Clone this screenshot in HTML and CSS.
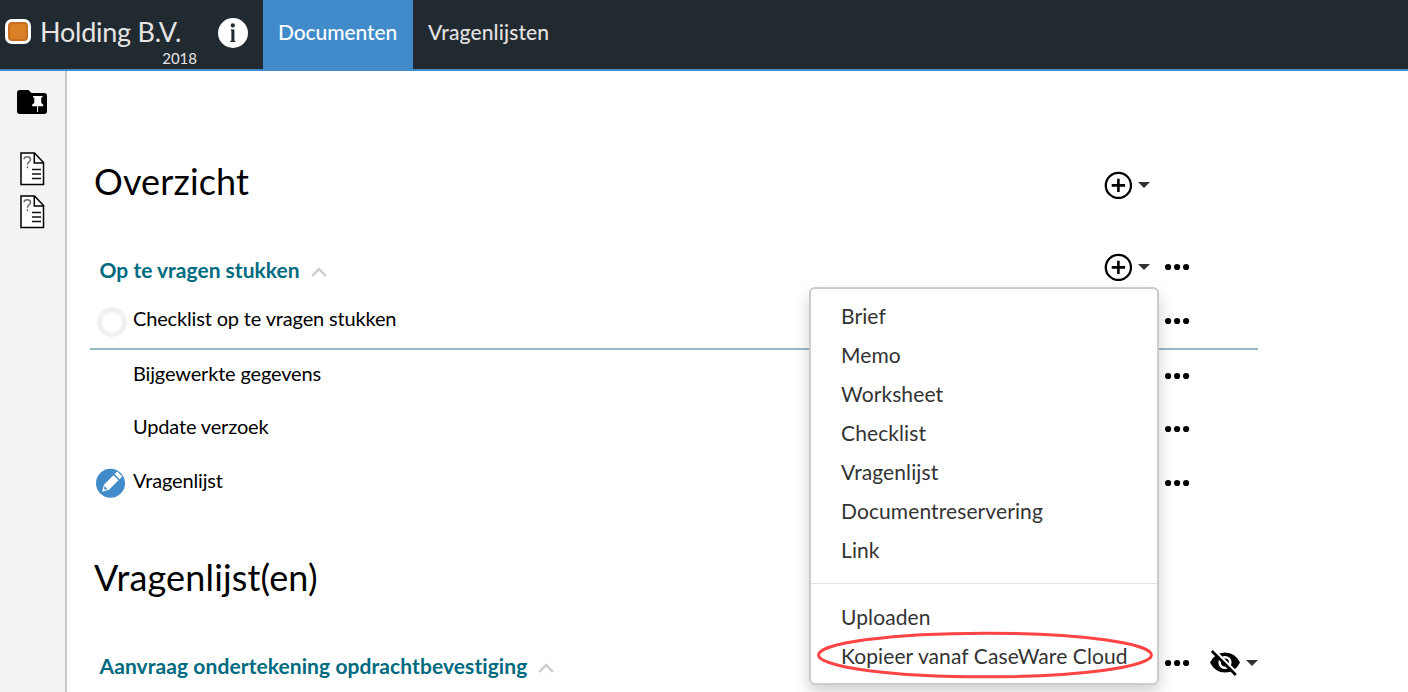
FILE: index.html
```html
<!DOCTYPE html>
<html lang="nl">
<head>
<meta charset="utf-8">
<title>Holding B.V.</title>
<link rel="stylesheet" href="styles.css">
</head>
<body>
<svg class="defs" aria-hidden="true">
  <symbol id="plus" viewBox="0 0 28 28"><circle cx="14.400" cy="14.400" r="12.600" fill="none" stroke="#000" stroke-width="2.300"/><path d="M14.400 7.700v13.400M7.700 14.400h13.400" stroke="#000" stroke-width="2.600"/></symbol>
  <symbol id="caret" viewBox="0 0 12 6"><path d="M0 0h12L6 6z" fill="#333"/></symbol>
  <symbol id="dots" viewBox="0 0 26 8"><circle cx="3.100" cy="4" r="3.100"/><circle cx="12.100" cy="4" r="3.100"/><circle cx="21.100" cy="4" r="3.100"/></symbol>
  <symbol id="doc" viewBox="0 0 25 34"><path d="M1 1h13.500l9 9.500V32.500H1z" fill="#fff" stroke="#000" stroke-width="1.500"/><path d="M14.300 1v10h9.500" fill="none" stroke="#000" stroke-width="1.500"/><path d="M12 17.500h9M12 22h9M12 26.500h9" stroke="#111" stroke-width="1.400"/><path d="M4 7.200c.3-3.300 6.500-3.400 6.500.2 0 2.500-3 2.300-3 5.400M7.500 14.200v2" fill="none" stroke="#666" stroke-width="1.400"/></symbol>
  <symbol id="chevron" viewBox="0 0 16 10"><path d="M1.200 9L8 2l6.800 7" fill="none" stroke="#ccc" stroke-width="2.500"/></symbol>
</svg>
<header class="topbar">
  <div class="brand">
    <span class="logo"></span>
    <div class="entity"><span class="entity-name">Holding B.V.</span><span class="entity-year">2018</span></div>
    <svg class="info" viewBox="0 0 30 30"><circle cx="15" cy="15" r="15" fill="#fff"/><circle cx="14.800" cy="7.400" r="2.100" fill="#222a31"/><path d="M12.800 11.500h3.600V22.700h1v1.300h-5v-1.300h1V12.800h-.6z" fill="#222a31"/></svg>
  </div>
  <nav class="tabs"><a class="tab active">Documenten</a><a class="tab">Vragenlijsten</a></nav>
</header>
<div class="layout">
  <aside class="sidebar">
    <svg class="folder" viewBox="0 0 30 24"><path d="M3 0h8.500l3 3H27a3 3 0 0 1 3 3v15a3 3 0 0 1-3 3H3a3 3 0 0 1-3-3V3a3 3 0 0 1 3-3z"/><path d="M16 6h9.500v1.500h-1.300v5.300l2 2v1.500h-5.100V22h-1v-5.700h-5v-1.500l2.200-2V7.500H16z" fill="#fff"/></svg>
    <svg class="doc"><use href="#doc"/></svg>
    <svg class="doc"><use href="#doc"/></svg>
  </aside>
  <main class="content">
    <div class="row title"><h1>Overzicht</h1><svg class="plus"><use href="#plus"/></svg><svg class="caret"><use href="#caret"/></svg></div>
    <div class="row section first"><h2><span>Op te vragen stukken</span><svg class="chevron"><use href="#chevron"/></svg></h2><svg class="plus"><use href="#plus"/></svg><svg class="caret"><use href="#caret"/></svg><svg class="dots"><use href="#dots"/></svg></div>
    <div class="row item checklist"><div class="label"><span class="slot"><i class="ring"></i></span><span class="name">Checklist op te vragen stukken</span></div><svg class="dots"><use href="#dots"/></svg></div>
    <div class="row item"><div class="label"><span class="slot"></span><span class="name">Bijgewerkte gegevens</span></div><svg class="dots"><use href="#dots"/></svg></div>
    <div class="row item tall"><div class="label"><span class="slot"></span><span class="name">Update verzoek</span></div><svg class="dots"><use href="#dots"/></svg></div>
    <div class="row item tall"><div class="label"><span class="slot"><svg class="pencil" viewBox="0 0 30 30"><circle cx="14.500" cy="15.300" r="14.500" fill="#428bca"/><g transform="rotate(45 15 15)"><path d="M11.200 2.400h7.200v3.800h-7.200zM11.200 7.700h7.200v13.500h-7.200zM11.200 21.200h7.200l-3.600 6.200z" fill="#fff"/><path d="M12.600 21.800h4.400l-2.200 2.700z" fill="#428bca"/></g></svg></span><span class="name">Vragenlijst</span></div><svg class="dots"><use href="#dots"/></svg></div>
    <div class="row title second"><h1>Vragenlijst(en)</h1></div>
    <div class="row section"><h2 class="long"><span>Aanvraag ondertekening opdrachtbevestiging</span><svg class="chevron"><use href="#chevron"/></svg></h2><svg class="dots"><use href="#dots"/></svg>
      <svg class="eye" viewBox="0 0 30 26"><path d="M0 12.500Q5 2.500 15 2.500t15 10q-5 10-15 10t-15-10z"/><circle cx="15" cy="12.500" r="5.300" fill="none" stroke="#fff" stroke-width="2.600"/><path d="M3.600-.5l24 24" stroke="#fff" stroke-width="2.400"/><path d="M1.800 1l24 24" stroke="#000" stroke-width="2.600"/></svg>
      <svg class="caret end"><use href="#caret"/></svg></div>
  </main>
</div>
<div class="menu">
  <a>Brief</a><a>Memo</a><a>Worksheet</a><a>Checklist</a><a>Vragenlijst</a><a>Documentreservering</a><a>Link</a>
  <hr>
  <a>Uploaden</a><a>Kopieer vanaf CaseWare Cloud</a>
  <svg class="mark" viewBox="0 0 338 48"><ellipse cx="169" cy="24" rx="166.500" ry="21.800" fill="none" stroke="#ff4444" stroke-width="3"/></svg>
</div>
</body>
</html>
```
FILE: styles.css
```css
* { box-sizing: border-box; }
body { margin: 0; height: 692px; overflow: hidden; position: relative; background: #fff; color: #000; font-family: Lato, "Open Sans", sans-serif; font-variant-ligatures: none; }
svg { display: block; flex: none; }
h1, h2 { margin: 0; font-weight: 400; }
.defs { display: none; }

.topbar { display: flex; height: 71px; background: #222a31; border-bottom: 2px solid #428bca; }
.brand { display: flex; width: 263px; padding: 16px 0 0 5px; }
.logo { width: 26px; height: 25px; margin-top: 3px; background: #d98026; border: 3px solid #fff; border-radius: 7px; box-shadow: inset 0 0 0 2px #c97020; }
.entity { display: flex; flex-direction: column; width: 166px; padding-left: 9px; color: #e6e6e6; white-space: nowrap; }
.entity-name { font-size: 27px; line-height: 32px; letter-spacing: -.25px; }
.entity-year { align-self: flex-end; font-size: 15px; line-height: 20px; }
.info { width: 30px; height: 30px; margin: 2px 0 0 21px; }
.tabs { display: flex; }
.tab { width: 150px; padding-left: 15px; line-height: 64px; font-size: 21px; font-weight: 500; letter-spacing: .12px; color: #e2e2e2; white-space: nowrap; }
.tab.active { background: #428bca; color: #fff; letter-spacing: -.08px; }

.layout { display: flex; height: 621px; }
.sidebar { width: 67px; padding: 19px 0 0 17px; background: #f3f3f3; border-right: 2px solid #c8c8c8; }
.folder { width: 30px; height: 24px; margin-bottom: 38px; }
.doc { width: 25px; height: 34px; margin: 0 0 9px 3px; }

.content { width: 1191px; padding: 74px 0 0 23px; }
.row { display: grid; grid-template-columns: 1014px 34px 27px 45px 37px 11px; align-items: center; }
.title { height: 80px; }
.title h1 { padding: 0 0 8px 4px; font-size: 36px; line-height: 44px; letter-spacing: .15px; white-space: nowrap; }
.section { height: 50px; }
.section.first { margin-top: 17px; }
.section h2 { display: flex; align-items: center; gap: 11px; padding: 5px 0 0 9.5px; font-size: 21px; line-height: 26px; font-weight: 700; letter-spacing: .02px; color: #006a80; white-space: nowrap; }
.section h2.long { letter-spacing: .08px; }
.chevron { width: 16px; height: 10px; margin-top: 5px; }
.item { height: 52px; }
.item.tall { height: 54px; }
.item.checklist { height: 58px; border-bottom: 2px solid #93bac3; }
.checklist .dots { margin-top: 2px; }
.label { display: flex; align-items: center; white-space: nowrap; }
.slot { width: 43px; padding-left: 6px; }
.ring { display: block; width: 30px; height: 30px; margin: 3px 0 0 1px; border: 5px solid #f1f1f1; border-radius: 50%; }
.pencil { width: 30px; height: 30px; }
.name { padding-bottom: 6px; font-size: 20px; line-height: 26px; letter-spacing: -.16px; }
.checklist .name { padding-bottom: 4px; }
.second { height: 86px; margin-top: 28px; margin-bottom: 14px; }
.second h1 { padding-bottom: 9px; }
.plus { grid-column: 2; width: 28px; height: 28px; overflow: visible; }
.caret { grid-column: 3; width: 12px; height: 6px; }
.dots { grid-column: 4; width: 26px; height: 8px; }
.eye { grid-column: 5; width: 30px; height: 26px; }
.caret.end { grid-column: 6; margin-left: -1px; }

.menu { position: absolute; left: 809px; top: 287px; width: 350px; height: 398px; padding: 7px 0; background: #fff; border: 2px solid #ccc; border-radius: 6px; box-shadow: 0 8px 16px rgba(0, 0, 0, .18); }
.menu a { display: block; padding-left: 30px; font-size: 21px; line-height: 39px; letter-spacing: .1px; color: #333; white-space: nowrap; }
.menu hr { height: 1px; margin: 14px 0 13px; border: 0; background: #e2e2e2; }
.mark { position: absolute; left: 5px; top: 342px; width: 338px; height: 48px; }
```
